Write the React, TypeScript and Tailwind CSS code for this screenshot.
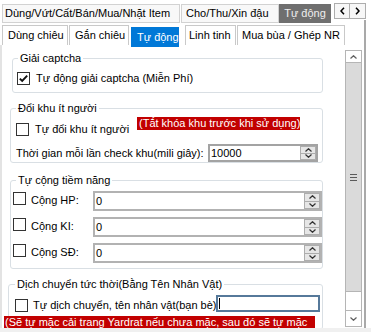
import type { ReactNode } from 'react';

type CheckProps = {
  checked?: boolean;
};

const Check = ({ checked }: CheckProps) => (
  <span className="flex h-[13px] w-[13px] shrink-0 items-center justify-center border border-[#333333] bg-white">
    {checked && (
      <svg width="11" height="11" viewBox="0 0 11 11">
        <path d="M1.8 5.6 L4.2 8 L9.2 2.6" fill="none" stroke="#111" strokeWidth="1.9" />
      </svg>
    )}
  </span>
);

const Chevron = ({ up, color = '#333' }: { up?: boolean; color?: string }) => (
  <svg width="7" height="4" viewBox="0 0 7 4">
    <path
      d={up ? 'M0.5 3.5 L3.5 0.7 L6.5 3.5' : 'M0.5 0.5 L3.5 3.3 L6.5 0.5'}
      fill="none"
      stroke={color}
      strokeWidth="1.2"
    />
  </svg>
);

const Spinner = () => (
  <div className="flex w-[16px] shrink-0 flex-col">
    <span className="flex flex-1 items-center justify-center border border-[#adadad] bg-[#e6e6e6]">
      <Chevron up />
    </span>
    <span className="flex flex-1 items-center justify-center border border-t-0 border-[#adadad] bg-[#e6e6e6]">
      <Chevron />
    </span>
  </div>
);

type GroupProps = {
  title: string;
  className: string;
  legendClass?: string;
  children: ReactNode;
};

const Group = ({ title, className, legendClass = 'ml-[5px]', children }: GroupProps) => (
  <fieldset className={`rounded-[3px] border border-[#d9dfe4] ${className}`}>
    <legend className={`px-[2px] leading-[13px] ${legendClass}`}>{title}</legend>
    {children}
  </fieldset>
);

const StatRow = ({ label }: { label: string }) => (
  <div className="grid h-[20px] grid-cols-[13px_62px_224px] items-start gap-x-[5px] pl-[2px]">
    <span className="mt-[1px]">
      <Check />
    </span>
    <span className="mt-[3px] leading-[13px]">{label}</span>
    <div className="-ml-[5px] flex h-[20px] border-2 border-[#b2b2b2] bg-white">
      <span className="flex-1 pl-[1px] leading-[16px]">0</span>
      <Spinner />
    </div>
  </div>
);

type TabProps = {
  label: string;
  className: string;
};

const InnerTab = ({ label, className }: TabProps) => (
  <div
    className={`flex h-[20px] shrink-0 items-center border-x border-t border-[#c9c9c9] bg-white ${className}`}
  >
    {label}
  </div>
);

export default function App() {
  return (
    <div className="h-[332px] w-[371px] overflow-hidden whitespace-nowrap bg-white font-['Liberation_Sans',Roboto,sans-serif] text-[11px] leading-[13px] text-black">
      {/* outer tab strip */}
      <div className="flex h-[20px] items-start pl-[2px] pt-[4px]">
        <div className="flex h-[19px] w-[178px] shrink-0 items-center border border-[#d2d2d2] bg-[#f8f8f8] pl-[2px]">
          Dùng/Vứt/Cất/Bán/Mua/Nhặt Item
        </div>
        <div className="ml-[1px] flex h-[19px] w-[98px] shrink-0 items-center border border-[#d2d2d2] bg-[#f8f8f8] pl-[4px]">
          Cho/Thu/Xin đậu
        </div>
        <div className="flex h-[19px] w-[52px] shrink-0 items-center justify-center bg-[#6f6f6f] text-[#eeeeee]">
          Tự động
        </div>
        <div className="relative z-10 ml-[3px] -mt-[1px] flex">
          <span className="flex h-[16px] w-[16px] items-center justify-center border border-[#adadad] bg-[#f7f7f7]">
            <svg width="5" height="8" viewBox="0 0 5 8">
              <path d="M4 0.8 L1 4 L4 7.2" fill="none" stroke="#000" strokeWidth="1.5" />
            </svg>
          </span>
          <span className="flex h-[16px] w-[16px] items-center justify-center border border-l-0 border-[#adadad] bg-[#f7f7f7]">
            <svg width="5" height="8" viewBox="0 0 5 8">
              <path d="M1 0.8 L4 4 L1 7.2" fill="none" stroke="#000" strokeWidth="1.5" />
            </svg>
          </span>
        </div>
      </div>

      <div className="w-[366px] border-r-2 border-[#a9a9a9] pt-[5px]">
        {/* inner tab strip */}
        <div className="flex h-[20px] items-start pl-[2px]">
          <InnerTab label="Dùng chiêu" className="w-[66px] pl-[5px]" />
          <InnerTab label="Gắn chiêu" className="ml-[1px] w-[60px] pl-[5px]" />
          <div className="relative z-10 ml-[2px] mt-[2px] flex h-[20px] w-[48px] shrink-0 items-center bg-[#0078d7] pl-[6px] text-white">
            Tự động
          </div>
          <InnerTab label="Linh tinh" className="ml-[6px] w-[51px] pl-[3px]" />
          <InnerTab label="Mua bùa / Ghép NR" className="ml-[1px] w-[108px] pl-[4px]" />
        </div>

        {/* body */}
        <div className="flex h-[283px]">
          <div className="h-[283px] w-[345px] shrink-0 overflow-hidden border-l-2 border-[#e3e3e3]">
            <Group title="Giải captcha" className="ml-[10px] mt-[7px] w-[311px] pb-[7px] pt-[6px]">
              <label className="flex h-[14px] items-center pl-[4px]">
                <Check checked />
                <span className="ml-[6px]">Tự động giải captcha (Miễn Phí)</span>
              </label>
            </Group>

            <Group title="Đổi khu ít người" className="ml-[8px] mt-[9px] w-[313px] pt-[2px]">
              <div className="grid h-[19px] grid-cols-[121px_163px] items-start pl-[5px]">
                <label className="mt-[6px] flex items-center">
                  <Check />
                  <span className="ml-[6px]">Tự đổi khu ít người</span>
                </label>
                <span className="h-[13px] overflow-hidden bg-[#c20000] pl-[2px] leading-[13px] text-white">
                  (Tắt khóa khu trước khi sử dụng)
                </span>
              </div>
              <div className="mt-[8px] grid h-[18px] grid-cols-[192px_110px] items-center pl-[5px]">
                <span>Thời gian mỗi lần check khu(mili giây):</span>
                <div className="flex h-[18px] border-2 border-[#a3a3a3] bg-white">
                  <span className="flex-1 pl-[1px] leading-[14px]">10000</span>
                  <Spinner />
                </div>
              </div>
            </Group>

            <Group
              title="Tự cộng tiềm năng"
              className="ml-[8px] mt-[11px] flex w-[312px] flex-col gap-[6px] pb-[5px] pt-[4px]"
            >
              <StatRow label="Cộng HP:" />
              <StatRow label="Cộng KI:" />
              <StatRow label="Cộng SĐ:" />
            </Group>

            <Group
              title="Dịch chuyển tức thời(Bằng Tên Nhân Vật)"
              className="ml-[6px] mt-[9px] w-[315px] pt-[4px]"
              legendClass="ml-[6px]"
            >
              <div className="grid h-[17px] grid-cols-[13px_183px_99px] items-end gap-x-[5px] pl-[6px]">
                <Check />
                <span className="leading-[13px]">Tự dịch chuyển, tên nhân vật(bạn bè)</span>
                <div className="-ml-[5px] flex h-[17px] items-center border-2 border-[#56799a] bg-white">
                  <span className="ml-[1px] h-[11px] w-[1px] bg-black" />
                </div>
              </div>
              <div className="-ml-[5px] mt-[4px] h-[13px] w-[311px] overflow-hidden bg-[#c20000] pl-[1px] text-white">
                (Sẽ tự mặc cải trang Yardrat nếu chưa mặc, sau đó sẽ tự mặc
              </div>
            </Group>
          </div>

          {/* scrollbar */}
          <div className="mt-[5px] flex h-[277px] w-[17px] shrink-0 flex-col border border-[#b5b5b5] bg-white">
            <div className="flex h-[12px] items-center justify-center border-b border-[#b5b5b5]">
              <Chevron up color="#606060" />
            </div>
            <div className="flex h-[229px] items-center justify-center border-b border-[#b5b5b5] bg-[#dadada]">
              <div className="flex flex-col gap-[2px]">
                <span className="h-[1px] w-[7px] bg-[#5a5a5a]" />
                <span className="h-[1px] w-[7px] bg-[#5a5a5a]" />
                <span className="h-[1px] w-[7px] bg-[#5a5a5a]" />
              </div>
            </div>
            <div className="h-[19px] border-b border-[#b5b5b5]" />
            <div className="flex flex-1 items-center justify-center">
              <Chevron color="#606060" />
            </div>
          </div>
        </div>
      </div>

      <div className="h-[4px] bg-[#f0f0f0]" />
    </div>
  );
}
